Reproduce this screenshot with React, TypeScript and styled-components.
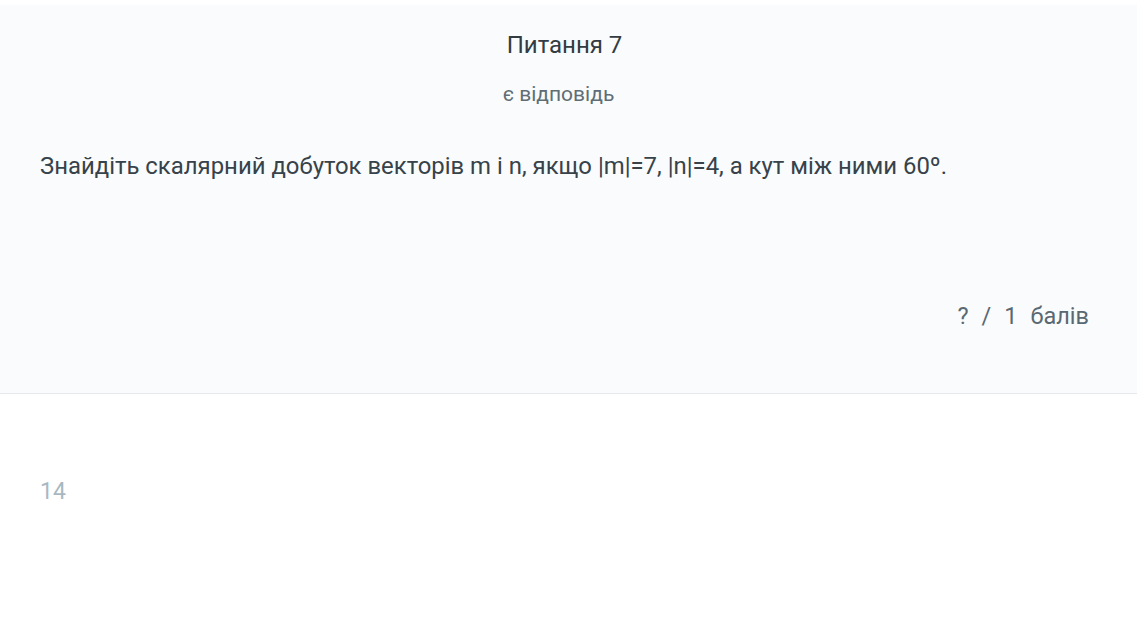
import styled, { createGlobalStyle } from "styled-components";

const GlobalStyle = createGlobalStyle`
  html, body {
    margin: 0;
    padding: 0;
    background: #ffffff;
    font-family: Roboto, "Noto Sans", sans-serif;
  }
`;

const Page = styled.div`
  padding-top: 5px;
`;

const QuestionCard = styled.section`
  background: #f9fbfc;
  border-bottom: 1px solid #e6eaec;
  padding: 25px 48px 62px 40px;
  display: flex;
  flex-direction: column;
`;

const Title = styled.h2`
  margin: 0;
  text-align: center;
  font-size: 24px;
  font-weight: 400;
  line-height: 30px;
  color: #333c42;
`;

const Status = styled.div`
  margin-top: 22px;
  padding-right: 12px;
  text-align: center;
  font-size: 21px;
  line-height: 24px;
  color: #5f6d76;
`;

const Prompt = styled.p`
  margin: 45px 0 0;
  font-size: 23.9px;
  line-height: 30px;
  color: #37424a;
`;

const Score = styled.div`
  margin-top: 120px;
  align-self: flex-end;
  display: flex;
  gap: 13px;
  font-size: 23.5px;
  line-height: 30px;
  color: #5a6872;
`;

const Footer = styled.div`
  padding: 83px 40px 0;
  font-size: 23px;
  line-height: 30px;
  color: #a8b8c2;
`;

export default function App() {
  return (
    <Page>
      <GlobalStyle />
      <QuestionCard>
        <Title>Питання 7</Title>
        <Status>є відповідь</Status>
        <Prompt>
          Знайдіть скалярний добуток векторів m і n, якщо |m|=7, |n|=4, а кут між ними 60º.
        </Prompt>
        <Score>
          <span>?</span>
          <span>/</span>
          <span>1</span>
          <span>балів</span>
        </Score>
      </QuestionCard>
      <Footer>14</Footer>
    </Page>
  );
}
